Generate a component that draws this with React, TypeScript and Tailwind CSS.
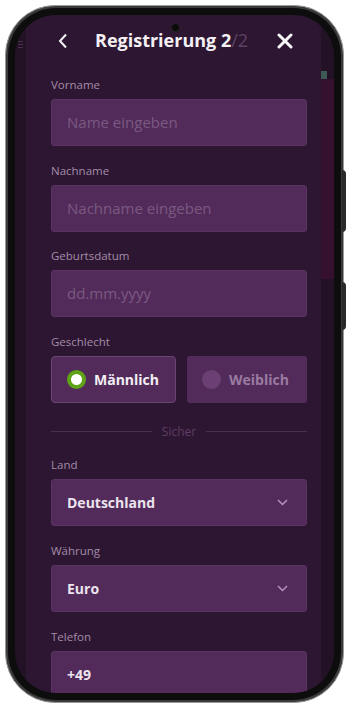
import React from 'react'

const font = { fontFamily: '"Open Sans", "Noto Sans", sans-serif' }

function Label({ children }: { children: React.ReactNode }) {
  return <div className="text-[11.5px] leading-[14px] text-[#a48ca8] mb-[7px]">{children}</div>
}

function TextInput({ placeholder, value }: { placeholder?: string; value?: string }) {
  return (
    <div className="h-[47px] rounded-[3px] bg-[#522b5a] border border-[#5a3362] flex items-center px-[15px]">
      {value ? (
        <span className="text-[14px] font-bold text-[#ece3ee]">{value}</span>
      ) : (
        <span className="text-[15px] text-[#7a5981]">{placeholder}</span>
      )}
    </div>
  )
}

function Select({ value }: { value: string }) {
  return (
    <div className="h-[47px] rounded-[3px] bg-[#522b5a] border border-[#5a3362] flex items-center justify-between px-[15px]">
      <span className="text-[14px] font-bold text-[#ece3ee]">{value}</span>
      <svg width="11" height="7" viewBox="0 0 11 7" className="mr-[3px]">
        <path d="M1 1l4.5 4.5L10 1" fill="none" stroke="#b595bb" strokeWidth="1.5" />
      </svg>
    </div>
  )
}

export default function App() {
  return (
    <div className="w-[350px] h-[710px] bg-white relative overflow-hidden" style={font}>
      {/* side buttons */}
      <div className="absolute left-[342px] top-[170px] w-[4px] h-[62px] rounded-r bg-[#2a2a2a]" />
      <div className="absolute left-[342px] top-[282px] w-[4px] h-[48px] rounded-r bg-[#2a2a2a]" />

      <div className="ml-[5px] mt-[5px] w-[339px] h-[698px] rounded-[50px] bg-[#3a3a3a] border border-[#9a9a9a] p-[2px]">
        <div className="w-full h-full rounded-[48px] bg-[#0d0d0d] p-[7px]">
          <div className="relative w-full h-full rounded-[41px] overflow-hidden bg-[#231126] flex">
            {/* camera */}
            <div className="absolute left-[156px] top-[8px] w-[9px] h-[9px] rounded-full bg-[#0a0a0a] border border-[#222]" />

            {/* left background strip */}
            <div className="w-[11px] shrink-0 bg-[#231126] flex flex-col items-center pt-[26px] gap-[2px]">
              <div className="w-[5px] h-[1px] bg-[#4a2f4f]" />
              <div className="w-[5px] h-[1px] bg-[#4a2f4f]" />
              <div className="w-[5px] h-[1px] bg-[#4a2f4f]" />
            </div>

            {/* modal panel */}
            <div className="w-[295px] shrink-0 bg-[#2d1632] pl-[25px] pr-[14px]">
              <div className="h-[50px] relative">
                <svg width="10" height="16" viewBox="0 0 10 16" className="absolute left-[7px] top-[18px]">
                  <path d="M8 1.5L2 8l6 6.5" fill="none" stroke="#f2f2f2" strokeWidth="2" />
                </svg>
                <div className="absolute left-[44px] top-[13px] text-[18px] leading-[24px] font-bold text-[#f4f0f4] whitespace-nowrap">
                  Registrierung 2<span className="font-normal text-[#5e4262]">/2</span>
                </div>
                <svg width="16" height="16" viewBox="0 0 16 16" className="absolute left-[226px] top-[18px]">
                  <path d="M2 2l12 12M14 2L2 14" stroke="#f6f6f6" strokeWidth="3" strokeLinecap="round" />
                </svg>
              </div>

              <div className="pt-[13px] flex flex-col gap-[17.5px]">
                <div>
                  <Label>Vorname</Label>
                  <TextInput placeholder="Name eingeben" />
                </div>
                <div>
                  <Label>Nachname</Label>
                  <TextInput placeholder="Nachname eingeben" />
                </div>
                <div>
                  <Label>Geburtsdatum</Label>
                  <TextInput placeholder="dd.mm.yyyy" />
                </div>
                <div>
                  <Label>Geschlecht</Label>
                  <div className="flex gap-[11px]">
                    <div className="w-[125px] h-[47px] rounded-[4px] bg-[#522b5a] border border-[#6a4572] flex items-center pl-[15px] gap-[8px]">
                      <div className="w-[19px] h-[19px] rounded-full border-[4px] border-[#5ea317] bg-white" />
                      <span className="text-[14px] font-bold text-[#f3eef4]">Männlich</span>
                    </div>
                    <div className="flex-1 h-[47px] rounded-[3px] bg-[#522b5a] flex items-center pl-[15px] gap-[8px]">
                      <div className="w-[19px] h-[19px] rounded-full bg-[#6c3f74]" />
                      <span className="text-[14px] font-bold text-[#9a7ba0]">Weiblich</span>
                    </div>
                  </div>
                </div>
              </div>

              <div className="flex items-center gap-[10px] mt-[21px] mb-[18px]">
                <div className="flex-1 h-px bg-[#4a2d50]" />
                <span className="text-[12px] leading-[16px] text-[#5e3d64]">Sicher</span>
                <div className="flex-1 h-px bg-[#4a2d50]" />
              </div>

              <div className="flex flex-col gap-[18px]">
                <div>
                  <Label>Land</Label>
                  <Select value="Deutschland" />
                </div>
                <div>
                  <Label>Währung</Label>
                  <Select value="Euro" />
                </div>
                <div>
                  <Label>Telefon</Label>
                  <TextInput value="+49" />
                </div>
              </div>
            </div>

            {/* right background strip */}
            <div className="flex-1 bg-[#231126] flex flex-col">
              <div className="h-[56px]" />
              <div className="h-[8px] w-[6px] bg-[#3e5a55]" />
              <div className="h-[200px] bg-[#36102f]" />
            </div>
          </div>
        </div>
      </div>
    </div>
  )
}
